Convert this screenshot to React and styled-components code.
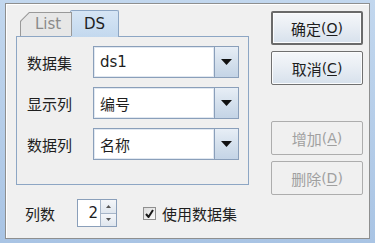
import React from "react";
import styled, { createGlobalStyle } from "styled-components";

const GlobalStyle = createGlobalStyle`
  html, body {
    margin: 0;
    padding: 0;
    background: #b4cde9;
  }
  body {
    font-family: "Noto Sans CJK SC", "DejaVu Sans", sans-serif;
  }
`;

const Frame = styled.div`
  width: 375px;
  height: 243px;
  box-sizing: border-box;
  padding: 3px 5px 4px 5px;
  background: linear-gradient(180deg, #c2d7ee 0%, #a9c4e4 100%);
`;

const Dialog = styled.div`
  box-sizing: border-box;
  height: 236px;
  border: 1px solid #8e8f8f;
  box-shadow: inset 1px 1px 0 #ffffff;
  background: #f0f0f0;
  display: flex;
  padding: 6px 0 0 10px;
`;

const LeftPane = styled.div`
  width: 233px;
  display: flex;
  flex-direction: column;
`;

const TabStrip = styled.div`
  display: flex;
  align-items: flex-end;
  height: 27px;
  padding-left: 4px;
  margin-bottom: -1px;
  position: relative;
  z-index: 1;
`;

/* inactive tab: beveled top-left corner drawn with two clipped layers */
const Tab = styled.div`
  position: relative;
  flex: none;
  box-sizing: border-box;
  width: 52px;
  height: 24px;
  margin-bottom: 1px;
  padding-left: 4px;
  background: #999999;
  clip-path: polygon(0 9px, 9px 0, 100% 0, 100% 100%, 0 100%);
  color: #8a8a8a;
  font-family: "DejaVu Sans", "Liberation Sans", sans-serif;
  font-size: 15px;
  display: flex;
  align-items: center;
  justify-content: center;

  &::before {
    content: "";
    position: absolute;
    inset: 1px 1px 0 1px;
    background: #e7e7e7;
    clip-path: polygon(0 8.5px, 8.5px 0, 100% 0, 100% 100%, 0 100%);
  }

  span {
    position: relative;
  }
`;

const ActiveTab = styled.div`
  flex: none;
  box-sizing: border-box;
  width: 49px;
  height: 27px;
  margin-left: -2px;
  border: 1px solid #8da6c4;
  border-bottom: none;
  border-radius: 2px 2px 0 0;
  background: linear-gradient(180deg, #d6e5f5 0%, #c3d8ee 100%);
  color: #222;
  font-family: "DejaVu Sans", "Liberation Sans", sans-serif;
  font-size: 15px;
  display: flex;
  align-items: center;
  justify-content: center;
`;

const TabPanel = styled.div`
  box-sizing: border-box;
  height: 149px;
  border: 1px solid #8da6c4;
  background: #efefef;
  padding: 9px 9px 0 10px;
  display: flex;
  flex-direction: column;
  gap: 9px;
`;

const FieldRow = styled.div`
  display: flex;
  align-items: center;
  height: 32px;
`;

const Label = styled.span`
  width: 66px;
  font-size: 15px;
  color: #1e1e1e;
  padding-top: 1px;
`;

const Combo = styled.div`
  box-sizing: border-box;
  width: 146px;
  height: 32px;
  display: flex;
  border: 1px solid #8a9fba;
  background: #fff;
`;

const ComboText = styled.div`
  flex: 1;
  display: flex;
  align-items: center;
  padding-left: 5px;
  font-size: 15px;
  color: #1e1e1e;
  font-family: ${(p) => (p.$latin ? '"DejaVu Sans", sans-serif' : '"Noto Sans CJK SC", sans-serif')};
  border: 1px solid #e1e8f1;
`;

const ComboButton = styled.div`
  width: 23px;
  border-left: 1px solid #8a9fba;
  background: linear-gradient(180deg, #e7eef6 0%, #d3dfec 55%, #c4d4e6 100%);
  display: flex;
  align-items: center;
  justify-content: center;
`;

const BottomRow = styled.div`
  display: flex;
  align-items: center;
  height: 28px;
  margin-top: 14px;
  padding-left: 9px;
`;

const SmallLabel = styled.span`
  width: 52px;
  font-size: 15px;
  color: #1e1e1e;
`;

const Spinner = styled.div`
  box-sizing: border-box;
  width: 40px;
  height: 28px;
  display: flex;
  border: 1px solid #8a9fba;
  background: #fff;
`;

const SpinValue = styled.div`
  flex: 1;
  display: flex;
  align-items: center;
  justify-content: flex-end;
  padding-right: 2px;
  font-family: "DejaVu Sans", sans-serif;
  font-size: 15px;
  color: #1e1e1e;
`;

const SpinButtons = styled.div`
  width: 15px;
  display: flex;
  flex-direction: column;
  border-left: 1px solid #a6b5c8;
`;

const SpinButton = styled.div`
  flex: 1;
  display: flex;
  align-items: center;
  justify-content: center;
  background: linear-gradient(180deg, #f4f6f9 0%, #dfe6ee 100%);
  & + & {
    border-top: 1px solid #a6b5c8;
  }
`;

const CheckLabel = styled.label`
  display: flex;
  align-items: center;
  margin-left: 26px;
  font-size: 15px;
  color: #1e1e1e;
  gap: 6px;
`;

const CheckBox = styled.span`
  box-sizing: border-box;
  width: 13px;
  height: 13px;
  border: 1px solid #8f8f8f;
  background: linear-gradient(135deg, #dcdcdc 0%, #fafafa 100%);
  display: flex;
  align-items: center;
  justify-content: center;
`;

const RightPane = styled.div`
  margin-left: 22px;
  padding-top: 1px;
  display: flex;
  flex-direction: column;
  width: 92px;
`;

const Button = styled.div`
  box-sizing: border-box;
  width: 92px;
  height: 34px;
  margin-top: ${(p) => p.$gap || 0}px;
  border: ${(p) => (p.$default ? "2px solid #6a6a6a" : p.disabled ? "1px solid #adadad" : "1px solid #707070")};
  border-radius: 2px;
  background: ${(p) =>
    p.disabled ? "#f0f0f0" : "linear-gradient(180deg, #f5f7fa 0%, #e9eef4 45%, #d7e1ec 100%)"};
  box-shadow: ${(p) => (p.disabled ? "none" : "inset 0 0 0 1px #fbfcfd")};
  color: ${(p) => (p.disabled ? "#a0a0a0" : "#1e1e1e")};
  font-size: 15px;
  display: flex;
  align-items: center;
  justify-content: center;
`;

const Mnemonic = styled.span`
  font-family: "DejaVu Sans", sans-serif;
  font-size: 14px;
  u {
    text-underline-offset: 2px;
  }
`;

const DownArrow = () => (
  <svg width="11" height="6" viewBox="0 0 11 6">
    <path d="M0 0 H11 L5.5 6 Z" fill="#111" />
  </svg>
);

const TinyArrow = ({ up }) => (
  <svg width="5" height="3" viewBox="0 0 5 3">
    <path d={up ? "M0 3 H5 L2.5 0 Z" : "M0 0 H5 L2.5 3 Z"} fill="#555" />
  </svg>
);

const fields = [
  { label: "数据集", value: "ds1", latin: true },
  { label: "显示列", value: "编号" },
  { label: "数据列", value: "名称" },
];

const buttons = [
  { text: "确定", key: "O", gap: 0, isDefault: true },
  { text: "取消", key: "C", gap: 6 },
  { text: "增加", key: "A", gap: 36, disabled: true },
  { text: "删除", key: "D", gap: 6, disabled: true },
];

export default function App() {
  return (
    <Frame>
      <GlobalStyle />
      <Dialog>
        <LeftPane>
          <TabStrip>
            <Tab>
              <span>List</span>
            </Tab>
            <ActiveTab>DS</ActiveTab>
          </TabStrip>
          <TabPanel>
            {fields.map((f) => (
              <FieldRow key={f.label}>
                <Label>{f.label}</Label>
                <Combo>
                  <ComboText $latin={f.latin}>{f.value}</ComboText>
                  <ComboButton>
                    <DownArrow />
                  </ComboButton>
                </Combo>
              </FieldRow>
            ))}
          </TabPanel>
          <BottomRow>
            <SmallLabel>列数</SmallLabel>
            <Spinner>
              <SpinValue>2</SpinValue>
              <SpinButtons>
                <SpinButton>
                  <TinyArrow up />
                </SpinButton>
                <SpinButton>
                  <TinyArrow />
                </SpinButton>
              </SpinButtons>
            </Spinner>
            <CheckLabel>
              <CheckBox>
                <svg width="9" height="9" viewBox="0 0 9 9">
                  <path d="M1 5 L3.5 8 L8 1" stroke="#1a1a1a" strokeWidth="2" fill="none" />
                </svg>
              </CheckBox>
              使用数据集
            </CheckLabel>
          </BottomRow>
        </LeftPane>
        <RightPane>
          {buttons.map((b) => (
            <Button key={b.key} $gap={b.gap} $default={b.isDefault} disabled={b.disabled}>
              {b.text}
              <Mnemonic>
                (<u>{b.key}</u>)
              </Mnemonic>
            </Button>
          ))}
        </RightPane>
      </Dialog>
    </Frame>
  );
}
